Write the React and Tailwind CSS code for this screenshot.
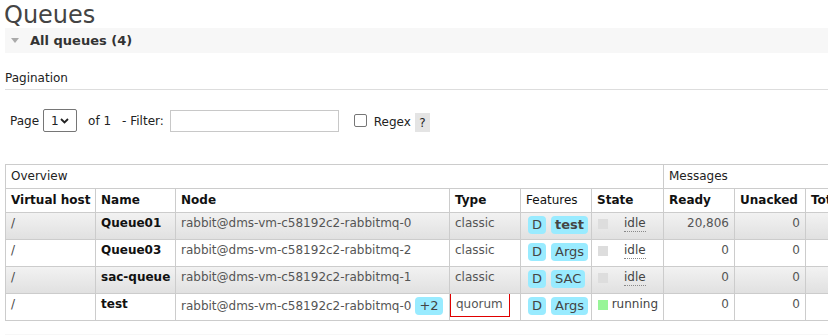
import React from "react";

const queues = [
  { vhost: "/", name: "Queue01", node: "rabbit@dms-vm-c58192c2-rabbitmq-0", type: "classic", features: ["D", "test"], state: "idle", ready: "20,806", unacked: "0", total: "20,806" },
  { vhost: "/", name: "Queue03", node: "rabbit@dms-vm-c58192c2-rabbitmq-2", type: "classic", features: ["D", "Args"], state: "idle", ready: "0", unacked: "0", total: "0" },
  { vhost: "/", name: "sac-queue", node: "rabbit@dms-vm-c58192c2-rabbitmq-1", type: "classic", features: ["D", "SAC"], state: "idle", ready: "0", unacked: "0", total: "0" },
  { vhost: "/", name: "test", node: "rabbit@dms-vm-c58192c2-rabbitmq-0", extra: "+2", type: "quorum", features: ["D", "Args"], state: "running", ready: "0", unacked: "0", total: "0" },
];

function Pill({ children, bold }) {
  return (
    <span
      className={`inline-block rounded-[4px] bg-[#99ebff] px-[4px] py-[2px] text-[13px] leading-[14px] text-[#444] ${bold ? "font-bold text-[#111]" : ""}`}
    >
      {children}
    </span>
  );
}

export default function App() {
  const td = "whitespace-nowrap border border-[#ccc] px-[5px] pt-[3px] pb-[5px] align-top leading-[15px]";
  const th = "whitespace-nowrap border border-[#ccc] px-[5px] py-[4px] text-left align-top leading-[15px]";

  return (
    <div className="h-[335px] w-[828px] overflow-hidden bg-white font-['DejaVu_Sans','Verdana',sans-serif] text-[12px] text-[#484848]">
      <h1 className="h-[28px] pl-[4px] text-[24px] leading-[30px] text-[#444]">Queues</h1>

      <div className="ml-[5px] flex h-[25px] items-center bg-[#f7f7f7]">
        <span className="ml-[6px] mr-[11px] h-0 w-0 border-x-[4px] border-t-[5px] border-x-transparent border-t-[#aaa]" />
        <span className="text-[13px] font-bold text-[#333]">All queues (4)</span>
      </div>

      <div className="ml-[5px] mt-[18px] border-b border-[#ddd] pb-[3px] leading-[15px] text-[#222]">
        Pagination
      </div>

      <div className="ml-[10px] mt-[19px] flex items-center text-[#222]">
        <span>Page</span>
        <div className="ml-[4px] flex h-[23px] w-[34px] items-center justify-between rounded-[2px] border border-[#767676] px-[7px]">
          <span>1</span>
          <svg width="9" height="6" viewBox="0 0 9 6">
            <path d="M1 1 L4.5 4.5 L8 1" fill="none" stroke="#222" strokeWidth="1.8" />
          </svg>
        </div>
        <span className="ml-[11px]">of 1</span>
        <span className="ml-[11px]">- Filter:</span>
        <div className="ml-[6px] h-[22px] w-[169px] border border-[#c8c8c8]" />
        <div className="ml-[15px] h-[13px] w-[13px] rounded-[2px] border border-[#767676]" />
        <span className="ml-[7px] mt-[2px]">Regex</span>
        <span className="ml-[4px] mt-[4px] flex h-[19px] w-[15px] items-center justify-center bg-[#e4e4e4]">?</span>
      </div>

      <table className="ml-[5px] mt-[32px] table-fixed border-collapse" style={{ width: 900 }}>
        <colgroup>
          <col className="w-[90px]" />
          <col className="w-[80px]" />
          <col className="w-[274px]" />
          <col className="w-[71px]" />
          <col className="w-[71px]" />
          <col className="w-[72px]" />
          <col className="w-[71px]" />
          <col className="w-[71px]" />
          <col className="w-[100px]" />
        </colgroup>
        <thead>
          <tr>
            <th colSpan={6} className={`${th} font-normal text-[#222]`}>Overview</th>
            <th colSpan={3} className={`${th} font-normal text-[#222]`}>Messages</th>
          </tr>
          <tr className="text-[#111]">
            <th className={`${th} font-bold`}>Virtual host</th>
            <th className={`${th} font-bold`}>Name</th>
            <th className={`${th} font-bold`}>Node</th>
            <th className={`${th} font-bold`}>Type</th>
            <th className={`${th} font-normal`}>Features</th>
            <th className={`${th} font-bold`}>State</th>
            <th className={`${th} font-bold`}>Ready</th>
            <th className={`${th} font-bold`}>Unacked</th>
            <th className={`${th} font-bold`}>Total</th>
          </tr>
        </thead>
        <tbody>
          {queues.map((q, i) => (
            <tr key={q.name} className={i % 2 === 0 ? "bg-gradient-to-b from-[#f2f2f2] to-[#e0e0e0]" : "bg-white"}>
              <td className={td}>{q.vhost}</td>
              <td className={`${td} font-bold text-[#111]`}>{q.name}</td>
              <td className={`${td} text-[#555]`}>
                {q.node}
                {q.extra && (
                  <span className="ml-[4px]">
                    <Pill>{q.extra}</Pill>
                  </span>
                )}
              </td>
              {q.type === "quorum" ? (
                <td className="border border-[#ccc] p-0 align-top leading-[15px]">
                  <div className="-mt-[1px] h-[24px] w-[60px] border border-[#e00000] pl-[5px] pt-[3px] text-[#555]">
                    quorum
                  </div>
                </td>
              ) : (
                <td className={`${td} text-[#555]`}>{q.type}</td>
              )}
              <td className={`${td} pl-[7px]`}>
                <Pill>{q.features[0]}</Pill>
                <span className="ml-[5px]">
                  <Pill bold={q.features[1] === "test"}>{q.features[1]}</Pill>
                </span>
              </td>
              <td className={td}>
                <span className="flex items-start">
                  <span className={`ml-[1px] mt-[3px] inline-block h-[10px] w-[10px] ${q.state === "running" ? "bg-[#98f598]" : "bg-[#dddddd]"}`} />
                  {q.state === "running" ? (
                    <span className="ml-[4px] text-[#444]">running</span>
                  ) : (
                    <span className="ml-[16px] border-b border-dotted border-[#888] text-[#444]">idle</span>
                  )}
                </span>
              </td>
              <td className={`${td} text-right text-[#555]`}>{q.ready}</td>
              <td className={`${td} text-right text-[#555]`}>{q.unacked}</td>
              <td className={`${td} text-right text-[#555]`}>{q.total}</td>
            </tr>
          ))}
        </tbody>
      </table>

      <div className="ml-[5px] mt-[13px] h-[25px] bg-[#f7f7f7]" />
    </div>
  );
}
